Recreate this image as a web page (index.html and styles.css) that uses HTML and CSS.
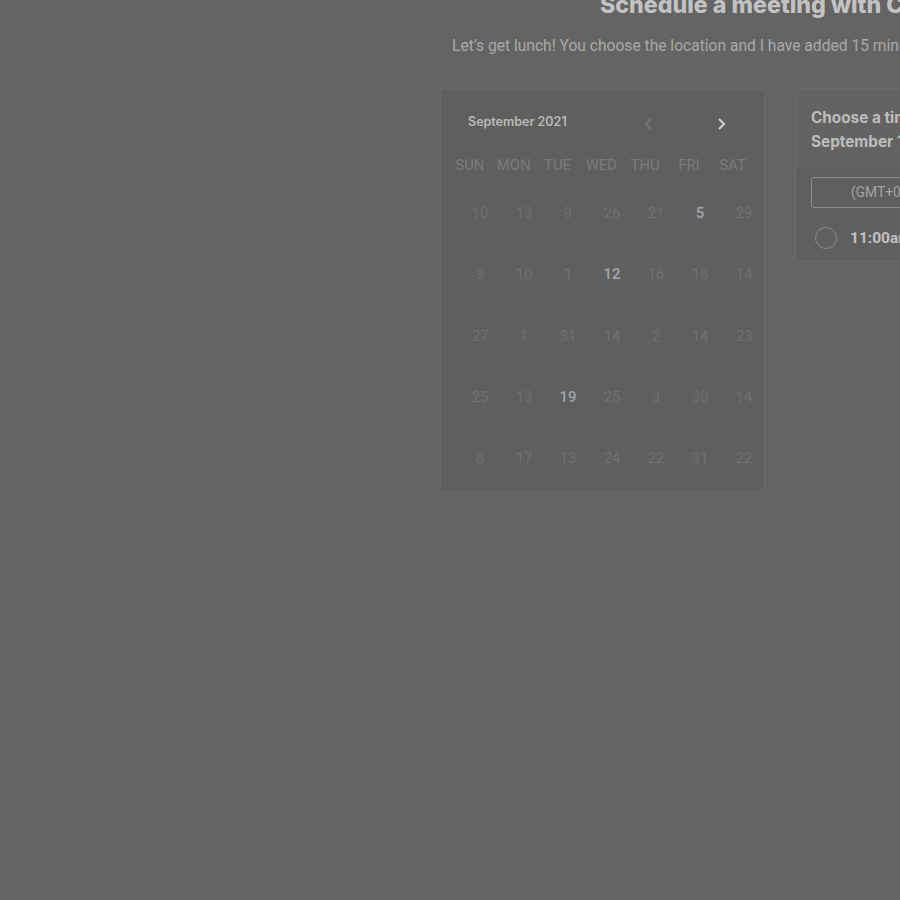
FILE: index.html
```html
<!DOCTYPE html>
<html>
<head>
<meta charset="utf-8">
<link rel="stylesheet" href="styles.css">
</head>
<body>
<div class="page">
  <header class="head">
    <h1 class="title">Schedule a meeting with Charlotte</h1>
    <p class="subtitle">Let’s get lunch! You choose the location and I have added 15 minutes to the meeting to account for travel.</p>
  </header>
  <div class="panels">
    <section class="cal">
      <div class="cal-head">
        <span class="month">September 2021</span>
        <div class="navs">
          <svg class="nav dim" width="14" height="14" viewBox="0 0 14 14"><path d="M9 2 L4 7 L9 12" fill="none" stroke="currentColor" stroke-width="2"/></svg>
          <svg class="nav" width="14" height="14" viewBox="0 0 14 14"><path d="M5 2 L10 7 L5 12" fill="none" stroke="currentColor" stroke-width="2"/></svg>
        </div>
      </div>
      <div class="weekdays">
        <span>SUN</span><span>MON</span><span>TUE</span><span>WED</span><span>THU</span><span>FRI</span><span>SAT</span>
      </div>
      <div class="dates">
        <span>10</span><span>13</span><span>9</span><span>26</span><span>21</span><span class="on">5</span><span>29</span>
        <span>9</span><span>10</span><span>1</span><span class="on">12</span><span>16</span><span>18</span><span>14</span>
        <span>27</span><span>1</span><span>31</span><span>14</span><span>2</span><span>14</span><span>23</span>
        <span>25</span><span>13</span><span class="on">19</span><span>25</span><span>3</span><span>30</span><span>14</span>
        <span>8</span><span>17</span><span>13</span><span>24</span><span>22</span><span>31</span><span>22</span>
      </div>
    </section>
    <section class="times">
      <div class="times-head">
        <div class="choose">Choose a time on</div>
        <div class="choose">September 12</div>
      </div>
      <div class="times-body">
        <div class="tz">(GMT+01:00) London, United Kingdom</div>
        <label class="slot"><span class="radio"></span><span class="slot-time">11:00am - 12:15pm</span></label>
      </div>
    </section>
  </div>
</div>
</body>
</html>
```
FILE: styles.css
```css
html, body { margin: 0; padding: 0; }
body {
  background: #646464;
  overflow: hidden;
  width: 900px;
  height: 900px;
  font-family: Roboto, "Liberation Sans", sans-serif;
}
.page {
  width: 700px;
  padding-left: 440px;
}
.head { white-space: nowrap; }
.title {
  margin: -9px 0 0 160px;
  font-family: Inter, "Liberation Sans", sans-serif;
  font-weight: 800;
  font-size: 23.2px;
  line-height: 28px;
  color: #c2c2c2;
}
.subtitle {
  margin: 17px 0 0 12px;
  font-size: 15.6px;
  line-height: 20px;
  color: #a9a9a9;
}
.panels {
  display: flex;
  align-items: flex-start;
  gap: 30px;
  margin-top: 33px;
}
.cal {
  flex: none;
  width: 325px;
  height: 403px;
  box-sizing: border-box;
  background: #5f5f5f;
  border: 1px solid #6a6a6a;
  border-radius: 3px;
}
.cal-head {
  display: flex;
  align-items: center;
  padding: 21px 0 0 27px;
  height: 20px;
}
.month {
  font-family: Inter, "Liberation Sans", sans-serif;
  font-weight: 600;
  font-size: 12.5px;
  color: #b9b9b9;
  width: 174px;
}
.navs { display: flex; gap: 58px; margin-top: 6px; }
.nav { color: #d4d4d4; }
.nav.dim { color: #777777; }
.weekdays {
  display: grid;
  grid-template-columns: repeat(7, 43.8px);
  margin: 24px 0 0 7px;
  font-size: 14.8px;
  line-height: 20px;
  color: #7b7b7b;
  text-align: center;
}
.dates {
  display: grid;
  grid-template-columns: repeat(7, 44px);
  grid-auto-rows: 61.3px;
  margin: 28px 0 0 17px;
  font-size: 14.8px;
  line-height: 20px;
  color: #717171;
  text-align: center;
}
.dates .on { color: #a6a6a6; font-weight: 500; }
.times {
  flex: none;
  width: 340px;
  height: 173px;
  box-sizing: border-box;
  border: 1px solid #6a6a6a;
  border-radius: 3px;
  background: #5f5f5f;
  margin-top: -1px;
}
.times-head {
  background: #636363;
  height: 80px;
  box-sizing: border-box;
  padding: 17px 0 0 15px;
  border-bottom: 1px solid #5a5a5a;
}
.choose {
  font-family: Inter, "Liberation Sans", sans-serif;
  font-weight: 700;
  font-size: 15.3px;
  line-height: 24px;
  color: #bdbdbd;
}
.times-body { padding: 8px 0 0 15px; }
.tz {
  box-sizing: border-box;
  height: 31px;
  border: 1px solid #8c8c8c;
  border-radius: 3px;
  font-size: 13.8px;
  line-height: 29px;
  color: #a3a3a3;
  padding-left: 39px;
  white-space: nowrap;
}
.slot { display: flex; align-items: center; margin-top: 19px; gap: 13px; white-space: nowrap; }
.radio {
  width: 20px;
  height: 20px;
  border: 1.5px solid #8a8a8a;
  border-radius: 50%;
  margin-left: 4px;
}
.slot-time {
  font-weight: 700;
  font-size: 15.5px;
  color: #c2c2c2;
}
```
